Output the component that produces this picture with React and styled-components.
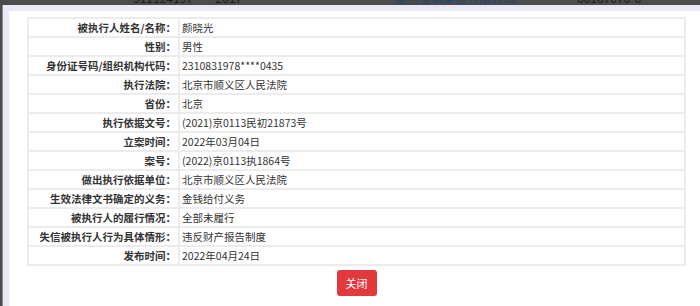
import React from "react";
import styled, { createGlobalStyle } from "styled-components";

const GlobalStyle = createGlobalStyle`
  html, body {
    margin: 0;
    padding: 0;
    background: #4b4b4b;
    font-family: "Noto Sans CJK SC", "Microsoft YaHei", sans-serif;
  }
`;

const Page = styled.div`
  position: relative;
  width: 700px;
  height: 306px;
  overflow: hidden;
  background: #4b4b4b;
`;

// the page behind the dialog, only its last row peeks out at the top
const BehindStrip = styled.div`
  height: 5px;
  overflow: hidden;
`;

const BehindRow = styled.div`
  display: grid;
  grid-template-columns: 262px 182px 1fr;
  padding-left: 133px;
  margin-top: -8px;
  font-size: 12px;
  line-height: 12px;
  white-space: nowrap;
`;

const BehindCell = styled.span`
  color: ${(p) => p.$color || "#1c1c1c"};
`;

// modal dialog laid over the page
const Dialog = styled.div`
  position: absolute;
  top: 5px;
  left: 3px;
  right: -20px;
  bottom: -20px;
  background: #fff;
  border-left: 6px solid #e8e8f6;
  border-top: 6px solid #e8e8f6;
  box-shadow: -1px 0 0 #8a8a8a;
  padding: 6px 0 0 18px;
`;

const Body = styled.div`
  width: 659px;
  display: flex;
  flex-direction: column;
  align-items: center;
  gap: 4px;
`;

const Table = styled.table`
  width: 100%;
  border-collapse: collapse;
  border: 2px solid #ececec;
  font-size: 10.5px;
  color: #333;
`;

const Row = styled.tr`
  height: 19px;
  border-bottom: 2px solid #ececec;
`;

const Label = styled.th`
  width: 147px;
  padding: 0 2px 0 0;
  text-align: right;
  font-weight: bold;
  border-right: 2px solid #ececec;
  white-space: nowrap;
  line-height: 17px;
`;

const Value = styled.td`
  padding: 0 0 0 2px;
  text-align: left;
  line-height: 17px;
`;

const CloseButton = styled.button`
  width: 40px;
  height: 26px;
  border: none;
  border-radius: 3px;
  background: #e4393c;
  color: #fff;
  font-family: inherit;
  font-size: 11px;
  padding: 0;
  cursor: pointer;
`;

const rows = [
  ["被执行人姓名/名称：", "颜晓光"],
  ["性别：", "男性"],
  ["身份证号码/组织机构代码：", "2310831978****0435"],
  ["执行法院：", "北京市顺义区人民法院"],
  ["省份：", "北京"],
  ["执行依据文号：", "(2021)京0113民初21873号"],
  ["立案时间：", "2022年03月04日"],
  ["案号：", "(2022)京0113执1864号"],
  ["做出执行依据单位：", "北京市顺义区人民法院"],
  ["生效法律文书确定的义务：", "金钱给付义务"],
  ["被执行人的履行情况：", "全部未履行"],
  ["失信被执行人行为具体情形：", "违反财产报告制度"],
  ["发布时间：", "2022年04月24日"],
];

const App = () => {
  return (
    <Page>
      <GlobalStyle />
      <BehindStrip>
        <BehindRow>
          <BehindCell>511124197****2617</BehindCell>
          <BehindCell $color="#24456f">星河互联集团有限公司</BehindCell>
          <BehindCell>60167076-6</BehindCell>
        </BehindRow>
      </BehindStrip>
      <Dialog>
        <Body>
          <Table>
            <tbody>
              {rows.map(([k, v]) => (
                <Row key={k}>
                  <Label>{k}</Label>
                  <Value>{v}</Value>
                </Row>
              ))}
            </tbody>
          </Table>
          <CloseButton>关闭</CloseButton>
        </Body>
      </Dialog>
    </Page>
  );
};

export default App;
